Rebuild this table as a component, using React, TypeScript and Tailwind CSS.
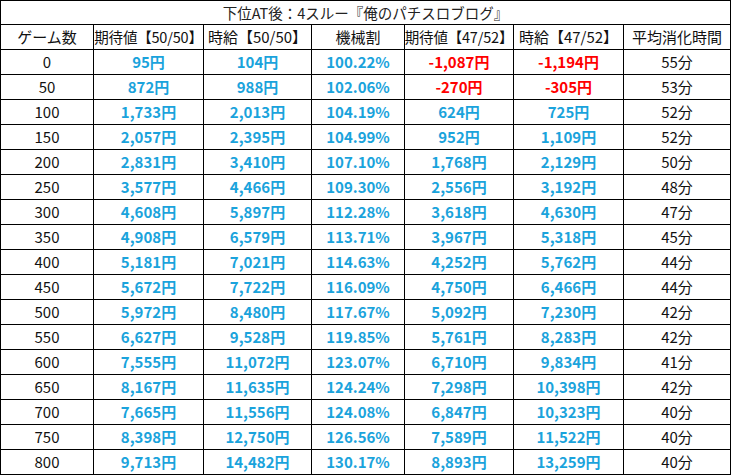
import React from "react";

type Row = [string, string, string, string, string, string, string];

const rows: Row[] = [
  ["0", "95円", "104円", "100.22%", "-1,087円", "-1,194円", "55分"],
  ["50", "872円", "988円", "102.06%", "-270円", "-305円", "53分"],
  ["100", "1,733円", "2,013円", "104.19%", "624円", "725円", "52分"],
  ["150", "2,057円", "2,395円", "104.99%", "952円", "1,109円", "52分"],
  ["200", "2,831円", "3,410円", "107.10%", "1,768円", "2,129円", "50分"],
  ["250", "3,577円", "4,466円", "109.30%", "2,556円", "3,192円", "48分"],
  ["300", "4,608円", "5,897円", "112.28%", "3,618円", "4,630円", "47分"],
  ["350", "4,908円", "6,579円", "113.71%", "3,967円", "5,318円", "45分"],
  ["400", "5,181円", "7,021円", "114.63%", "4,252円", "5,762円", "44分"],
  ["450", "5,672円", "7,722円", "116.09%", "4,750円", "6,466円", "44分"],
  ["500", "5,972円", "8,480円", "117.67%", "5,092円", "7,230円", "42分"],
  ["550", "6,627円", "9,528円", "119.85%", "5,761円", "8,283円", "42分"],
  ["600", "7,555円", "11,072円", "123.07%", "6,710円", "9,834円", "41分"],
  ["650", "8,167円", "11,635円", "124.24%", "7,298円", "10,398円", "42分"],
  ["700", "7,665円", "11,556円", "124.08%", "6,847円", "10,323円", "40分"],
  ["750", "8,398円", "12,750円", "126.56%", "7,589円", "11,522円", "40分"],
  ["800", "9,713円", "14,482円", "130.17%", "8,893円", "13,259円", "40分"],
];

const headers = [
  "ゲーム数",
  "期待値【50/50】",
  "時給【50/50】",
  "機械割",
  "期待値【47/52】",
  "時給【47/52】",
  "平均消化時間",
];

const cell =
  "border-r border-b border-black flex items-center justify-center overflow-hidden whitespace-nowrap";

function colorFor(col: number, v: string) {
  if (col === 0 || col === 6) return "text-[#111] font-normal";
  if (v.startsWith("-")) return "text-[#ff0000] font-bold";
  return "text-[#1aa3dc] font-bold";
}

export default function App() {
  return (
    <div
      className="w-[732px] h-[476px] bg-white"
      style={{ fontFamily: '"Noto Sans CJK JP", "Noto Sans", sans-serif' }}
    >
      <div className="grid grid-cols-[93px_110px_108px_93px_109px_110px_107px] border-l border-t border-black w-[731px] auto-rows-[25px] grid-rows-[24px]">
        <div className={`${cell} col-span-7 text-[14.5px] text-[#222] h-[24px]`}>
          下位AT後：4スルー『俺のパチスロブログ』
        </div>
        {headers.map((h, i) => (
          <div
            key={h}
            className={`${cell} ${i === 1 || i === 4 ? "text-[14.5px] tracking-[-0.2px]" : "text-[15px]"} text-[#111]`}
          >
            {h}
          </div>
        ))}
        {rows.map((r) =>
          r.map((v, i) => (
            <div key={r[0] + "-" + i} className={`${cell} text-[15px] ${colorFor(i, v)}`}>
              {v}
            </div>
          ))
        )}
      </div>
    </div>
  );
}
